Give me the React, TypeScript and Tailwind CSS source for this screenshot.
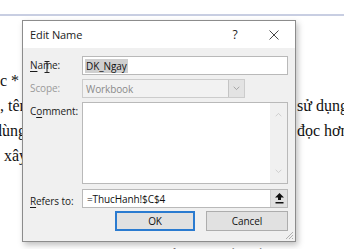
import React from 'react'

const ui = { fontFamily: '"Open Sans", "Noto Sans", Arial, sans-serif' }
const serif = { fontFamily: '"Liberation Serif", "Times New Roman", serif' }

function Chevron({ up, className }: { up?: boolean; className?: string }) {
  return (
    <svg viewBox="0 0 10 6" className={className} fill="none" stroke="currentColor" strokeWidth="1">
      {up ? <path d="M1 5.5 5 1.5 9 5.5" /> : <path d="M1 0.5 5 4.5 9 0.5" />}
    </svg>
  )
}

function Label({ text, u, disabled }: { text: string; u?: number; disabled?: boolean }) {
  return (
    <div className={'w-[52px] shrink-0 pt-[2px] whitespace-nowrap ' + (disabled ? 'text-[#9a9a9a]' : 'text-[#1a1a1a]')}>
      {u === undefined
        ? text
        : (
          <>
            {text.slice(0, u)}
            <span className="underline underline-offset-2">{text[u]}</span>
            {text.slice(u + 1)}
          </>
        )}
    </div>
  )
}

export default function App() {
  return (
    <div className="relative w-[344px] h-[249px] overflow-hidden bg-white">
      {/* document behind the dialog */}
      <div className="h-[14px]" />
      <div className="h-[2px] bg-[#c8cee2]" />
      <div className="pt-[52px] text-[16px] leading-[25px] text-[#111]" style={serif}>
        <div className="flex h-[25px]"><span>c * (</span></div>
        <div className="flex h-[25px]"><span>, tên</span><span className="pl-[297px] whitespace-nowrap absolute">sử dụng</span></div>
        <div className="flex h-[25px]"><span className="-ml-[6px]">dùng</span><span className="pl-[297px] whitespace-nowrap absolute">đọc hơn</span></div>
        <div className="flex h-[25px]"><span className="pl-[4px]">xây</span></div>
        <div className="h-[75px]" />
        <div className="whitespace-nowrap pl-[20px] tracking-[1px]">khi bạn thích hợp hiểu là nhiều lần thì</div>
      </div>

      {/* Edit Name dialog */}
      <div
        className="absolute left-[22px] top-[20px] w-[274px] h-[222px] flex flex-col border border-[#8c8c8c] bg-[#f0f0f0] shadow-[2px_3px_6px_rgba(0,0,0,0.25)] text-[10px] leading-[14px] tracking-[-0.1px]"
        style={ui}
      >
        <div className="h-[27px] bg-white flex items-center pl-[7px] text-[11px] text-[#222]">
          <span className="flex-1">Edit Name</span>
          <span className="w-[14px] text-center mr-[27px] text-[12px]">?</span>
          <svg viewBox="0 0 10 10" className="w-[10px] h-[10px] mr-[16px]" stroke="#333" strokeWidth="0.9">
            <path d="M0.5 0.5 9.5 9.5M9.5 0.5 0.5 9.5" />
          </svg>
        </div>

        <div className="flex-1 flex flex-col px-[7px] pt-[8px] gap-[4px]">
          {/* Name */}
          <div className="flex items-start relative">
            <Label text="Name:" u={0} />
            <div className="flex-1 h-[19px] bg-white border border-[#b9b9b9] flex items-center pl-[2px]">
              <span className="bg-[#cfcfcf] text-[#111] px-[1px]">DK_Ngay</span>
            </div>
            <svg viewBox="0 0 6 12" className="absolute left-[14px] top-[5px] w-[6px] h-[12px]" stroke="#222" strokeWidth="1" fill="none">
              <path d="M0.5 0.5h5M3 0.5v11M0.5 11.5h5" />
            </svg>
          </div>

          {/* Scope */}
          <div className="flex items-start">
            <Label text="Scope:" disabled />
            <div className="w-[163px] h-[19px] bg-[#f2f2f2] border border-[#cccccc] flex items-center">
              <span className="flex-1 pl-[3px] text-[#8a8a8a]">Workbook</span>
              <div className="w-[16px] h-[17px] bg-[#e3e3e3] border-l border-[#c4c4c4] flex items-center justify-center text-[#8a8a8a]">
                <Chevron className="w-[7px] h-[5px]" />
              </div>
            </div>
          </div>

          {/* Comment */}
          <div className="flex items-start">
            <Label text="Comment:" u={1} />
            <div className="flex-1 h-[82px] bg-white border border-[#b9b9b9] flex justify-end">
              <div className="w-[17px] h-full bg-[#f0f0f0] flex flex-col items-center justify-between py-[9px] text-[#c2c2c2]">
                <Chevron up className="w-[7px] h-[5px]" />
                <Chevron className="w-[7px] h-[5px]" />
              </div>
            </div>
          </div>

          {/* Refers to */}
          <div className="flex items-start mt-[1px]">
            <div className="pt-[3px]"><Label text="Refers to:" u={0} /></div>
            <div className="flex-1 h-[19px] bg-white border border-[#b9b9b9] flex items-center">
              <span className="flex-1 pl-[4px] text-[#111]">=ThucHanh!$C$4</span>
              <div className="w-[17px] h-[17px] bg-[#e1e1e1] border-l border-[#cfcfcf] flex items-center justify-center">
                <svg viewBox="0 0 9 11" className="w-[9px] h-[11px]" fill="#111">
                  <path d="M4.5 0 9 4.5H6V7H3V4.5H0Z" />
                  <rect x="0.5" y="9" width="8" height="1.5" />
                </svg>
              </div>
            </div>
          </div>

          {/* buttons */}
          <div className="flex justify-end gap-[11px] mt-[-1px]">
            <button className="w-[80px] h-[20px] bg-[#e1e1e1] border-2 border-[#2a7bd0] text-[#111]">OK</button>
            <button className="w-[82px] h-[20px] bg-[#e1e1e1] border border-[#adadad] text-[#111]">Cancel</button>
          </div>
        </div>

        <svg viewBox="0 0 10 10" className="absolute right-[1px] bottom-[1px] w-[10px] h-[10px]" stroke="#b0b0b0" strokeWidth="1">
          <path d="M9 2 2 9M9 5 5 9M9 8 8 9" />
        </svg>
      </div>
    </div>
  )
}
